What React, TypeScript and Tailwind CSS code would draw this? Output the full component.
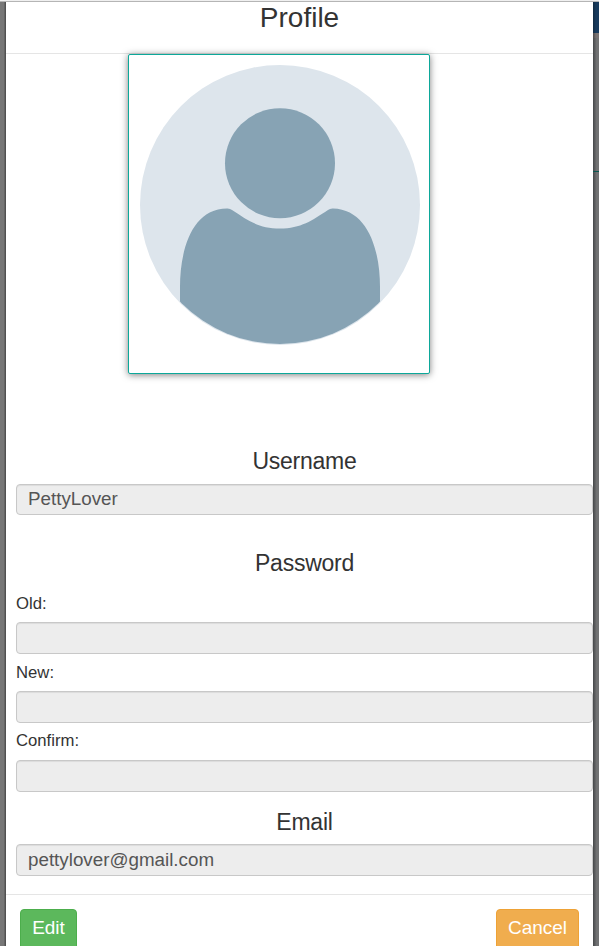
import type { ReactNode } from "react";

function Heading({ children, className }: { children: ReactNode; className: string }) {
  return (
    <h3 className={`h-[25px] text-center text-[23px] leading-[27px] tracking-[-0.25px] ${className}`}>{children}</h3>
  );
}

function Field({ value = "", label, className }: { value?: string; label: string; className: string }) {
  return (
    <input
      disabled
      aria-label={label}
      defaultValue={value}
      className={`block w-full shrink-0 rounded-[4px] border border-[#c8c8c8] bg-[#ededed] px-[11px] text-[18.8px] text-[#555] shadow-[inset_0_1px_1px_rgba(0,0,0,0.075)] ${className}`}
    />
  );
}

function Avatar() {
  return (
    <svg viewBox="0 0 300 318" className="h-[318px] w-[300px]">
      <defs>
        <clipPath id="disc">
          <circle cx="151" cy="149.800" r="139.2" />
        </clipPath>
      </defs>
      <circle cx="151" cy="150" r="140" fill="#dde5ec" />
      <circle cx="151" cy="108.200" r="55" fill="#87a3b4" />
      <path
        clipPath="url(#disc)"
        fill="#87a3b4"
        d="M51 300V232C51 195 63 153.500 98 153.500Q101 153.300 103 155C119 165.500 130 173.500 151 173.500S183 165.500 199 155Q201 153.300 204 153.500C239 154.500 251 195 251 232V300Z"
      />
    </svg>
  );
}

export default function App() {
  return (
    <div className="flex h-[946px] w-[599px] flex-col overflow-hidden bg-white font-['Liberation_Sans',Arial,sans-serif] text-[#333]">
      <div className="h-[2px] shrink-0 border-b border-[#b5b5b5] bg-[#f0f0f0]" />
      <div className="flex min-h-0 flex-1">
        <div className="w-[6px] bg-linear-to-r from-[#777] from-60% to-[#484848]" />
        <main className="flex w-[587px] flex-col">
          <header className="h-[52px] shrink-0 border-b border-[#e5e5e5] text-center">
            <h1 className="text-[28px] leading-[31px]">Profile</h1>
          </header>
          <section className="flex flex-1 flex-col pl-[10px]">
            <div className="ml-[112px] h-[320px] w-[302px] shrink-0 rounded-[2px] border border-[#0ca89a] bg-white shadow-[0_1px_7px_rgba(0,0,0,0.5)]">
              <Avatar />
            </div>
            <Heading className="mt-[74px]">Username</Heading>
            <Field label="Username" value="PettyLover" className="mt-[11px] h-[31px] pb-[1px]" />
            <Heading className="mt-[35px]">Password</Heading>
            <label className="mt-[19px] h-[20px] text-[16.7px] leading-[20px]">Old:</label>
            <Field label="Old" className="mt-[8px] h-[32px]" />
            <label className="mt-[9px] h-[20px] text-[16.7px] leading-[20px]">New:</label>
            <Field label="New" className="mt-[8px] h-[32px]" />
            <label className="mt-[8px] h-[20px] text-[16.7px] leading-[20px]">Confirm:</label>
            <Field label="Confirm" className="mt-[9px] h-[32px]" />
            <Heading className="mt-[17px]">Email</Heading>
            <Field label="Email" value="pettylover@gmail.com" className="mt-[10px] h-[32px] pb-[1px]" />
          </section>
          <footer className="flex h-[52px] shrink-0 justify-between border-t border-[#e5e5e5] pt-[14px] pr-[14px] pl-[14px]">
            <button className="h-[42px] w-[57px] shrink-0 rounded-[4px] border border-[#4cae4c] bg-[#5cb85c] pb-[3px] text-[19px] text-white">Edit</button>
            <button className="h-[42px] w-[83px] shrink-0 rounded-[4px] border border-[#eea236] bg-[#f0ad4e] pb-[3px] text-[19px] text-white">Cancel</button>
          </footer>
        </main>
        <div className="flex w-[6px] flex-col">
          <div className="h-[31px] bg-linear-to-r from-[#112b43] to-[#173a5c] to-50%" />
          <div className="h-[5px] bg-linear-to-r from-[#4c4848] to-[#777272] to-50%" />
          <div className="h-[133px] bg-linear-to-r from-[#454749] to-[#717273] to-60%" />
          <div className="h-px bg-[#0a5650]" />
          <div className="flex-1 bg-linear-to-r from-[#454749] to-[#717273] to-60%" />
        </div>
      </div>
    </div>
  );
}
